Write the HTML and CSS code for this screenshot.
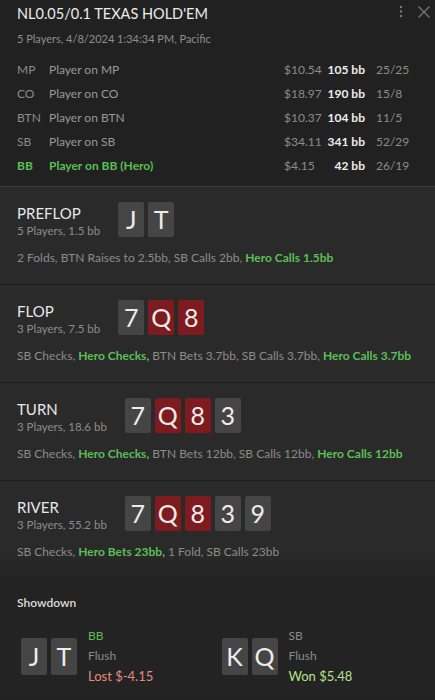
FILE: index.html
```html
<!DOCTYPE html>
<html>
<head>
<meta charset="utf-8">
<link rel="stylesheet" href="styles.css">
</head>
<body>
<div class="app">
  <header class="head">
    <div class="head-top">
      <div class="title">NL0.05/0.1 TEXAS HOLD'EM</div>
      <div class="head-icons">
        <svg class="icon" width="6" height="16" viewBox="0 0 6 16"><circle cx="3" cy="3" r="1.2" fill="#7a7a7a"/><circle cx="3" cy="7.5" r="1.2" fill="#7a7a7a"/><circle cx="3" cy="12" r="1.2" fill="#7a7a7a"/></svg>
        <svg class="icon" width="14" height="14" viewBox="0 0 14 14"><path d="M1.5 1.5 L12.5 12.5 M12.5 1.5 L1.5 12.5" stroke="#7a7a7a" stroke-width="1.2" fill="none"/></svg>
      </div>
    </div>
    <div class="sub">5 Players, 4/8/2024 1:34:34 PM, Pacific</div>
    <div class="players">
      <div class="prow"><span class="pos">MP</span><span class="pname">Player on MP</span><span class="stack">$10.54</span><span class="bb">105 bb</span><span class="ratio">25/25</span></div>
      <div class="prow"><span class="pos">CO</span><span class="pname">Player on CO</span><span class="stack">$18.97</span><span class="bb">190 bb</span><span class="ratio">15/8</span></div>
      <div class="prow"><span class="pos">BTN</span><span class="pname">Player on BTN</span><span class="stack">$10.37</span><span class="bb">104 bb</span><span class="ratio">11/5</span></div>
      <div class="prow"><span class="pos">SB</span><span class="pname">Player on SB</span><span class="stack">$34.11</span><span class="bb">341 bb</span><span class="ratio">52/29</span></div>
      <div class="prow hero"><span class="pos">BB</span><span class="pname">Player on BB (Hero)</span><span class="stack">$4.15</span><span class="bb">42 bb</span><span class="ratio">26/19</span></div>
    </div>
  </header>

  <section class="street">
    <div class="street-top">
      <div class="street-info">
        <div class="street-name">PREFLOP</div>
        <div class="street-sub">5 Players, 1.5 bb</div>
      </div>
      <div class="cards"><span class="card">J</span><span class="card">T</span></div>
    </div>
    <div class="actions">2 Folds, BTN Raises to 2.5bb, SB Calls 2bb, <b class="hero-act">Hero Calls 1.5bb</b></div>
  </section>

  <section class="street">
    <div class="street-top">
      <div class="street-info">
        <div class="street-name">FLOP</div>
        <div class="street-sub">3 Players, 7.5 bb</div>
      </div>
      <div class="cards"><span class="card">7</span><span class="card red">Q</span><span class="card red">8</span></div>
    </div>
    <div class="actions">SB Checks, <b class="hero-act">Hero Checks,</b> BTN Bets 3.7bb, SB Calls 3.7bb, <b class="hero-act">Hero Calls 3.7bb</b></div>
  </section>

  <section class="street">
    <div class="street-top">
      <div class="street-info">
        <div class="street-name">TURN</div>
        <div class="street-sub">3 Players, 18.6 bb</div>
      </div>
      <div class="cards"><span class="card">7</span><span class="card red">Q</span><span class="card red">8</span><span class="card">3</span></div>
    </div>
    <div class="actions">SB Checks, <b class="hero-act">Hero Checks,</b> BTN Bets 12bb, SB Calls 12bb, <b class="hero-act">Hero Calls 12bb</b></div>
  </section>

  <section class="street last">
    <div class="street-top">
      <div class="street-info">
        <div class="street-name">RIVER</div>
        <div class="street-sub">3 Players, 55.2 bb</div>
      </div>
      <div class="cards"><span class="card">7</span><span class="card red">Q</span><span class="card red">8</span><span class="card">3</span><span class="card">9</span></div>
    </div>
    <div class="actions">SB Checks, <b class="hero-act">Hero Bets 23bb,</b> 1 Fold, SB Calls 23bb</div>
  </section>

  <section class="showdown">
    <div class="sd-title">Showdown</div>
    <div class="sd-grid">
      <div class="sd-player">
        <div class="cards"><span class="card">J</span><span class="card">T</span></div>
        <div class="sd-info">
          <div class="sd-pos green">BB</div>
          <div class="sd-hand">Flush</div>
          <div class="sd-res lost">Lost $-4.15</div>
        </div>
      </div>
      <div class="sd-player">
        <div class="cards"><span class="card">K</span><span class="card">Q</span></div>
        <div class="sd-info">
          <div class="sd-pos">SB</div>
          <div class="sd-hand">Flush</div>
          <div class="sd-res won">Won $5.48</div>
        </div>
      </div>
    </div>
  </section>
</div>
</body>
</html>
```

FILE: styles.css
```css
* { box-sizing: border-box; }
html, body { margin: 0; padding: 0; }
body {
  background: #222222;
  font-family: Lato, "Noto Sans", sans-serif;
  color: #9a9a9a;
  width: 435px;
  height: 700px;
  overflow: hidden;
}
.app { display: flex; flex-direction: column; }

.head {
  background: #212121;
  padding: 4px 17px 8px 17px;
  border-bottom: 1px solid #3a3a3a;
}
.head-top { display: flex; justify-content: space-between; align-items: flex-start; }
.title { font-size: 14.5px; line-height: 20px; color: #ececec; }
.head-icons { display: flex; gap: 13px; align-items: center; margin-top: 0; margin-right: -13px; }
.icon { display: block; }
.sub { font-size: 11px; line-height: 16px; margin-top: 7px; color: #8e8e8e; white-space: nowrap; }

.players { margin-top: 11px; display: flex; flex-direction: column; }
.prow {
  display: grid;
  grid-template-columns: 32px 1fr 44px 37px 53px;
  font-size: 12px;
  line-height: 24px;
  color: #8c8c8c;
  white-space: nowrap;
}
.pname { color: #999; }
.bb { text-align: right; font-weight: 700; color: #ededed; justify-self: end; }
.ratio { padding-left: 11px; }
.prow.hero .pos, .prow.hero .pname { color: #5cbf56; font-weight: 700; }

.street {
  background: #2a2a2a;
  padding: 15px 17px 18px 17px;
  border-bottom: 1px solid #1c1c1c;
}
.street.last { border-bottom: none; background: linear-gradient(#2a2a2a 70%, #242424); }
.street-top { display: flex; align-items: flex-start; gap: 18px; }
.street-info { margin-top: 1px; white-space: nowrap; }
.street-name { font-size: 15px; line-height: 20px; color: #e8e8e8; }
.street-sub { font-size: 11.5px; line-height: 16px; color: #8c8c8c; }
.cards { display: flex; gap: 4px; }
.card {
  width: 26px;
  height: 35px;
  background: #454545;
  border-radius: 2px;
  color: #ececec;
  font-size: 25px;
  line-height: 35px;
  text-align: center;
}
.card.red { background: #7e1b1f; }
.actions { margin-top: 11px; font-size: 12px; line-height: 16px; color: #8c8c8c; white-space: nowrap; }
.hero-act { color: #5cbf56; font-weight: 700; }

.showdown {
  background: #232323;
  padding: 17px 17px 10px 17px;
  flex: 1;
}
.sd-title { font-size: 12px; line-height: 16px; color: #dcdcdc; font-weight: 600; }
.sd-grid { display: grid; grid-template-columns: 1fr 1fr; margin-top: 15px; }
.sd-player { display: flex; align-items: center; gap: 11px; padding-left: 4px; }
.sd-player .card { height: 37px; line-height: 37px; }
.sd-info { font-size: 12px; line-height: 20px; color: #8c8c8c; }
.sd-pos.green { color: #5cbf56; }
.sd-res { font-size: 13px; }
.lost { color: #e38a84; }
.won { color: #b9e08a; }
```
